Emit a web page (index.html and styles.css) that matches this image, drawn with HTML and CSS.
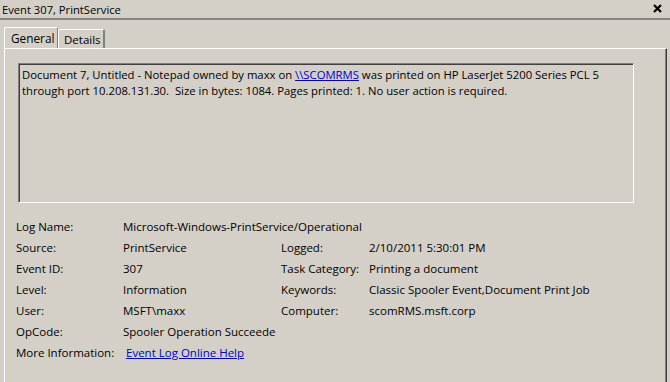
FILE: index.html
```html
<!DOCTYPE html>
<html lang="en">
<head>
    <meta charset="UTF-8">
    <title>Event 307, PrintService</title>
    <link rel="stylesheet" href="styles.css">
</head>
<body>

    <div class="titlebar">
        <span class="title">Event 307, PrintService</span>
        <svg class="close" width="9" height="9" viewBox="0 0 9 9">
            <path d="M1 1 L8 8 M8 1 L1 8" stroke="#000" stroke-width="2.2"/>
        </svg>
    </div>

    <div class="tabs">
        <div class="tab active">General</div>
        <div class="tab">Details</div>
    </div>

    <div class="panel">
        <div class="message">
            Document 7, Untitled - Notepad owned by maxx on <a href="#">\\SCOMRMS</a> was printed on HP LaserJet 5200 Series PCL 5
            through port 10.208.131.30.&nbsp; Size in bytes: 1084. Pages printed: 1. No user action is required.
        </div>

        <div class="props">
            <div class="label">Log Name:</div>
            <div class="value wide">Microsoft-Windows-PrintService/Operational</div>

            <div class="label">Source:</div>
            <div class="value">PrintService</div>
            <div class="label">Logged:</div>
            <div class="value">2/10/2011 5:30:01 PM</div>

            <div class="label">Event ID:</div>
            <div class="value">307</div>
            <div class="label">Task Category:</div>
            <div class="value">Printing a document</div>

            <div class="label">Level:</div>
            <div class="value">Information</div>
            <div class="label">Keywords:</div>
            <div class="value">Classic Spooler Event,Document Print Job</div>

            <div class="label">User:</div>
            <div class="value">MSFT\maxx</div>
            <div class="label">Computer:</div>
            <div class="value">scomRMS.msft.corp</div>

            <div class="label">OpCode:</div>
            <div class="value">Spooler Operation Succeede</div>
            <div class="label"></div>
            <div class="value"></div>

            <div class="label">More Information:</div>
            <div class="value link"><a href="#">Event Log Online Help</a></div>
        </div>
    </div>

</body>
</html>
```

FILE: styles.css
```css
body {
    margin: 0;
    background-color: #d4d0c8;
    font-family: 'Open Sans', sans-serif;
    font-size: 11.5px;
    color: #000;
    overflow: hidden;
    height: 382px;
}

a {
    color: #0000cc;
}

.titlebar {
    height: 18px;
    border-bottom: 2px solid #868686;
    display: flex;
    align-items: center;
    justify-content: space-between;
    padding: 0 8px 0 2px;
}

.title {
    font-size: 11.2px;
}

.close {
    margin-top: -2px;
}

.tabs {
    display: flex;
    align-items: flex-end;
    margin-top: 7px;
    padding-left: 4px;
}

.tab {
    height: 19px;
    padding: 0 5px;
    display: flex;
    align-items: center;
    border-top: 1px solid #fff;
    border-left: 1px solid #fff;
    border-right: 2px solid #808080;
    border-radius: 2px 2px 0 0;
    box-sizing: border-box;
    width: 47px;
}

.tab.active {
    height: 21px;
    width: 54px;
    padding: 0 6px;
    font-size: 11.8px;
    border-right: 1px solid #808080;
}

.panel {
    margin-left: 4px;
    margin-right: 3px;
    height: 340px;
    border-top: 1px solid #fff;
    border-left: 1px solid #fff;
    border-right: 1px solid #404040;
    box-shadow: inset -1px 0 0 #808080;
    padding: 14px 0 0 13px;
    box-sizing: border-box;
}

.message {
    width: 616px;
    height: 140px;
    box-sizing: border-box;
    border-top: 1px solid #808080;
    border-left: 1px solid #808080;
    border-right: 1px solid #fff;
    border-bottom: 1px solid #fff;
    box-shadow: inset 1px 1px 0 #404040;
    padding: 3px 3px;
    font-size: 11.3px;
    line-height: 16px;
}

.props {
    display: grid;
    grid-template-columns: 107px 158px 88px 1fr;
    grid-auto-rows: 21px;
    align-items: center;
    margin-top: 13px;
    margin-left: -2px;
}

.value.wide {
    grid-column: 2 / 5;
}

.value.link {
    padding-left: 3px;
}
```
